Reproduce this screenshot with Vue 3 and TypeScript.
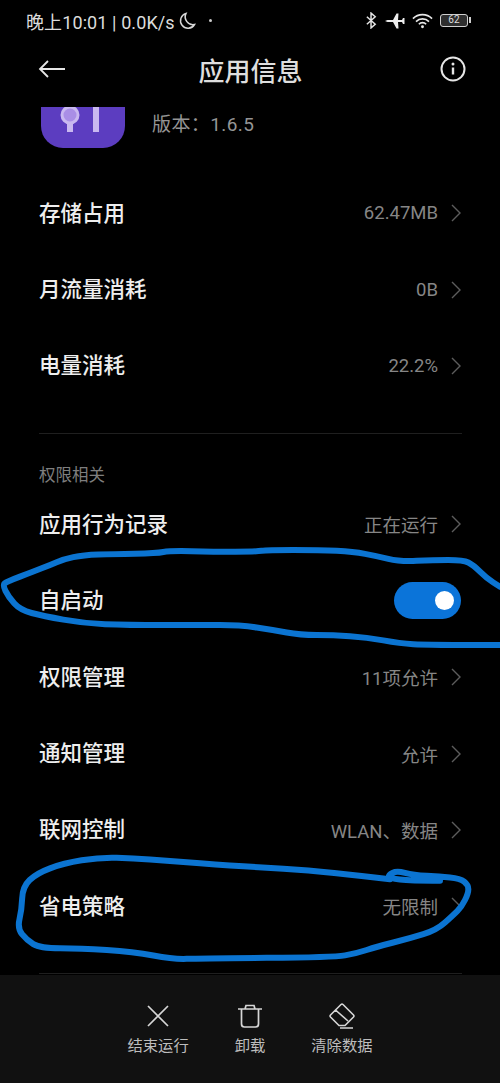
<script setup lang="ts">
type Pt = [number, number]

const rowsTop = [
  { label: '存储占用', value: '62.47MB' },
  { label: '月流量消耗', value: '0B' },
  { label: '电量消耗', value: '22.2%' },
]
const rowsBottom = [
  { label: '应用行为记录', value: '正在运行', arrow: true },
  { label: '自启动', toggle: true },
  { label: '权限管理', value: '11项允许', arrow: true },
  { label: '通知管理', value: '允许', arrow: true },
  { label: '联网控制', value: 'WLAN、数据', arrow: true },
  { label: '省电策略', value: '无限制', arrow: true },
]

const strokeA: Pt[] = [[1500,345],[1280,345],[1200,340],[1100,322],[1000,315],[900,315],[820,300],[720,285],[600,285],[380,285],[250,280],[130,258],[60,240],[25,200],[8,165],[20,155],[100,125],[150,105],[190,88],[250,75],[340,72],[470,70],[510,62],[640,65],[770,65],[800,60],[960,60],[1060,65],[1130,78],[1200,95],[1300,90],[1390,90],[1420,105],[1460,145],[1500,170]]
const strokeB: Pt[] = [[1320,122],[1230,122],[1170,115],[1165,105],[1190,92],[1240,105],[1320,110],[1380,115],[1405,135],[1405,160],[1385,200],[1360,225],[1310,270],[1230,295],[1130,320],[1070,340],[1000,352],[600,355],[520,358],[400,335],[240,325],[120,325],[80,300],[52,265],[65,210],[68,140],[110,100],[190,70],[300,52],[400,55],[500,62],[700,78],[850,85],[1000,98],[1170,118]]

function smooth(points: Pt[], top: number): string {
  const p = points.map(([x, y]): Pt => [x / 3, y / 3 + top])
  let d = `M${p[0][0]} ${p[0][1]}`
  for (let i = 1; i < p.length - 1; i++) {
    const mx = (p[i][0] + p[i + 1][0]) / 2
    const my = (p[i][1] + p[i + 1][1]) / 2
    d += ` Q${p[i][0]} ${p[i][1]} ${mx} ${my}`
  }
  const last = p[p.length - 1]
  return d + ` L${last[0]} ${last[1]}`
}
const scribbles = [smooth(strokeA, 530), smooth(strokeB, 840)]
</script>

<template>
  <div class="screen">
    <div class="status">
      <div class="status-left">
        <span>晚上10:01 | 0.0K/s</span>
        <svg class="moon" viewBox="0 0 18 18" width="18" height="18"><path d="M8 1.500a7.500 7.500 0 1 0 8.500 11A7.800 7.800 0 0 1 8 1.500z" fill="none" stroke="#d8d8d8" stroke-width="1.500"/></svg>
        <span class="dot"></span>
      </div>
      <div class="status-right">
        <svg viewBox="0 0 14 18" width="13" height="17"><path d="M2 5l9 8-4.500 4V1L11 5l-9 8" fill="none" stroke="#e4e4e4" stroke-width="1.600"/></svg>
        <svg viewBox="0 0 20 16" width="20" height="16"><path d="M0 8L2.500 6.900H8L11.500 0.500H13.500L13 6.900H17L18 5H19.500V11H18L17 9.100H13L13.500 15.500H11.500L8 9.100H2.500Z" fill="#ececec"/></svg>
        <svg viewBox="0 0 22 16" width="21" height="16"><path d="M1 5.500a14 14 0 0 1 20 0M4.200 8.700a9.500 9.500 0 0 1 13.600 0M7.200 11.500a5 5 0 0 1 7.600 0" fill="none" stroke="#e8e8e8" stroke-width="1.700"/><circle cx="11" cy="14" r="1.500" fill="#e8e8e8"/></svg>
        <div class="battery"><span>62</span></div>
      </div>
    </div>

    <header class="nav">
      <svg viewBox="0 0 28 20" width="28" height="20"><path d="M27 10H2M10 2l-8 8 8 8" fill="none" stroke="#e6e6e6" stroke-width="1.800"/></svg>
      <h1>应用信息</h1>
      <svg viewBox="0 0 26 26" width="26" height="26"><circle cx="13" cy="13" r="11.500" fill="none" stroke="#e6e6e6" stroke-width="2"/><circle cx="13" cy="8" r="1.500" fill="#e6e6e6"/><path d="M13 11.500v7" stroke="#e6e6e6" stroke-width="2.400"/></svg>
    </header>

    <div class="content">
      <section class="app-head">
        <div class="app-icon">
          <svg viewBox="0 0 84 41" width="84" height="41">
            <circle cx="29" cy="8" r="8" fill="#a98ee6" stroke="#c9b8f0" stroke-width="3"/>
            <rect x="26" y="16" width="6" height="9" fill="#c9b8f0"/>
            <rect x="52" y="0" width="6" height="25" fill="#c9b8f0"/>
          </svg>
        </div>
        <div class="version">版本：1.6.5</div>
      </section>

      <div v-for="r in rowsTop" :key="r.label" class="row">
        <span class="label">{{ r.label }}</span>
        <span class="value">{{ r.value }}</span>
        <svg class="chev" viewBox="0 0 10 18" width="10" height="18"><path d="M1 1l8 8-8 8" fill="none" stroke="#5c5c5c" stroke-width="1.400"/></svg>
      </div>

      <div class="divider first"></div>
      <div class="section">权限相关</div>

      <div v-for="r in rowsBottom" :key="r.label" class="row">
        <span class="label">{{ r.label }}</span>
        <template v-if="r.toggle">
          <span class="toggle"><i></i></span>
        </template>
        <template v-else>
          <span class="value">{{ r.value }}</span>
          <svg class="chev" viewBox="0 0 10 18" width="10" height="18"><path d="M1 1l8 8-8 8" fill="none" stroke="#5c5c5c" stroke-width="1.400"/></svg>
        </template>
      </div>

      <div class="divider last"></div>
    </div>

    <footer class="bar">
      <div class="action">
        <svg viewBox="0 0 24 24" width="24" height="24"><path d="M2 2l20 20M22 2L2 22" fill="none" stroke="#d6d6d6" stroke-width="1.700"/></svg>
        <span>结束运行</span>
      </div>
      <div class="action">
        <svg viewBox="0 0 26 24" width="26" height="24"><path d="M1 5h24M8 5l1-3.500h8L18 5M4.500 5v15a3 3 0 0 0 3 3h11a3 3 0 0 0 3-3V5" fill="none" stroke="#d6d6d6" stroke-width="1.700"/></svg>
        <span>卸载</span>
      </div>
      <div class="action">
        <svg viewBox="0 0 26 26" width="26" height="26"><path d="M14 1.500l10.500 10.500a1.500 1.500 0 0 1 0 2L16 22.500H10L1.500 14a1.500 1.500 0 0 1 0-2L12 1.500a1.500 1.500 0 0 1 2 0zM6.500 7L19 18M11 25h13" fill="none" stroke="#d6d6d6" stroke-width="1.600"/></svg>
        <span>清除数据</span>
      </div>
    </footer>

    <svg class="ink" viewBox="0 0 500 1083" width="500" height="1083">
      <path v-for="(d, i) in scribbles" :key="i" :d="d" fill="none" stroke="#0b74d1" stroke-width="6" stroke-linecap="round" stroke-linejoin="round"/>
    </svg>
  </div>
</template>

<style scoped>
.screen {
  position: relative;
  width: 500px;
  height: 1083px;
  overflow: hidden;
  display: flex;
  flex-direction: column;
  background: #000;
  color: #e8e8e8;
  font-family: Roboto, "Noto Sans CJK SC", sans-serif;
}
.status {
  height: 41px;
  flex: none;
  display: flex;
  justify-content: space-between;
  align-items: center;
  padding: 0 29px 0 26px;
  font-size: 18px;
  letter-spacing: 0.100px;
  color: #dcdcdc;
}
.status-left, .status-right { display: flex; align-items: center; }
.moon { margin-left: 3px; }
.dot { width: 3px; height: 3px; border-radius: 50%; background: #ccc; margin-left: 13px; }
.status-right { gap: 7px; }
.battery {
  width: 28px;
  height: 13px;
  border: 1.500px solid #cfcfcf;
  border-radius: 3px;
  box-sizing: border-box;
  margin-right: 3px;
  font-size: 10px;
  line-height: 10px;
  text-align: center;
  position: relative;
  background: #2e2e2e;
}
.battery::after {
  content: "";
  position: absolute;
  right: -4px;
  top: 2px;
  width: 2px;
  height: 6px;
  background: #cfcfcf;
}
.nav {
  height: 56px;
  flex: none;
  display: flex;
  align-items: center;
  justify-content: space-between;
  padding: 0 34px 0 38px;
}
.nav h1 {
  margin: 0 5px 0 0;
  font-size: 26px;
  font-weight: 500;
  color: #dedede;
}
.content { flex: 1; min-height: 0; padding: 10px 38px 0 39px; }
.app-head { height: 68px; display: flex; }
.app-icon {
  width: 84px;
  height: 41px;
  background: #5c3dc0;
  border-radius: 0 0 22px 22px;
  flex: none;
  margin-left: 2px;
}
.version {
  margin: 5px 0 0 27px;
  font-size: 19px;
  line-height: 26px;
  letter-spacing: 0.400px;
  color: #959595;
}
.row {
  height: 76.400px;
  display: flex;
  align-items: center;
}
.label { font-size: 21.500px; font-weight: 500; color: #eeeeee; flex: 1; padding-bottom: 4px; }
.value { font-size: 18.500px; color: #868686; }
.chev { margin-left: 13px; margin-right: 1px; }
.toggle {
  width: 67px;
  height: 37px;
  border-radius: 19px;
  background: #0b74d9;
  position: relative;
  margin-right: 1px;
}
.toggle i {
  position: absolute;
  right: 7px;
  top: 9px;
  width: 19px;
  height: 19px;
  border-radius: 50%;
  background: #fff;
}
.divider { height: 1px; background: #1f1f1f; }
.divider.first { margin-top: 29px; }
.divider.last { margin-top: 28px; }
.section {
  font-size: 16.500px;
  color: #7e7e7e;
  line-height: 22px;
  margin: 31px 0 -1px;
}
.bar {
  height: 108px;
  flex: none;
  background: #111111;
  display: flex;
  justify-content: center;
  align-items: flex-start;
  gap: 46px;
  padding-top: 28px;
  box-sizing: border-box;
}
.action {
  display: flex;
  flex-direction: column;
  align-items: center;
  gap: 4px;
  font-size: 15.300px;
  color: #bdbdbd;
}
.action svg { height: 26px; }
.ink { position: absolute; left: 0; top: 0; pointer-events: none; }
</style>
